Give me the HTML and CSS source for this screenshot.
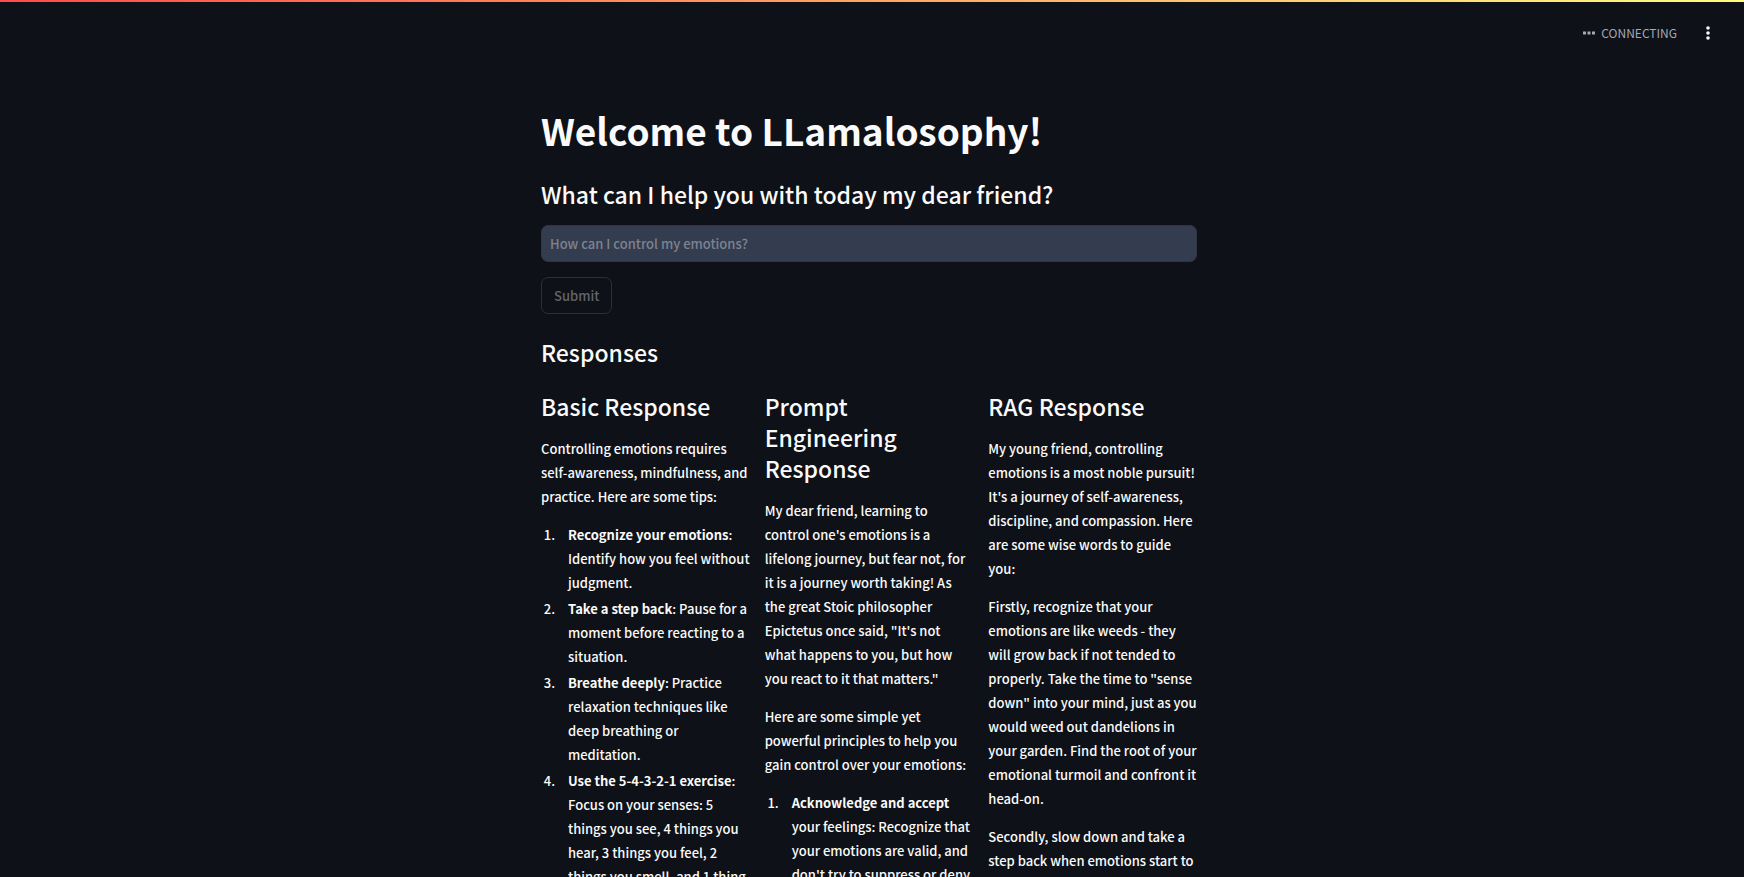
FILE: index.html
```html
<!DOCTYPE html>
<html lang="en">
<head>
<meta charset="utf-8">
<meta name="viewport" content="width=device-width, initial-scale=1">
<title>LLamalosophy</title>
<link rel="stylesheet" href="styles.css">
</head>
<body>
<div class="app">
  <div class="decoration"></div>
  <header class="toolbar">
    <div class="status" role="status">
      <svg class="status-icon" viewBox="0 0 12 4" aria-hidden="true"><path d="M0 .5h3v3H0zM4.5 .5h3v3h-3zM9 .5h3v3H9z"/></svg>
      <span>CONNECTING</span>
    </div>
    <button class="menu-button" type="button" aria-label="Main menu">
      <svg viewBox="0 0 16 16" aria-hidden="true"><circle cx="8" cy="3" r="1.8"/><circle cx="8" cy="8" r="1.8"/><circle cx="8" cy="13" r="1.8"/></svg>
    </button>
  </header>
  <div class="scroll-area">
    <main class="content">
      <h1>Welcome to LLamalosophy!</h1>
      <form class="question">
        <h2><label for="question">What can I help you with today my dear friend?</label></h2>
        <input id="question" class="question-input" type="text" placeholder="How can I control my emotions?">
        <button class="submit" type="submit" disabled>Submit</button>
      </form>
      <h2 class="responses-title">Responses</h2>
      <div class="columns">
        <section class="column">
          <h2>Basic Response</h2>
          <p>Controlling emotions requires self-awareness, mindfulness, and practice. Here are some tips:</p>
          <ol>
            <li><strong>Recognize your emotions</strong>: Identify how you feel without judgment.</li>
            <li><strong>Take a step back</strong>: Pause for a moment before reacting to a situation.</li>
            <li><strong>Breathe deeply</strong>: Practice relaxation techniques like deep breathing or meditation.</li>
            <li><strong>Use the 5-4-3-2-1 exercise</strong>: Focus on your senses: 5 things you see, 4 things you hear, 3 things you feel, 2 things you smell, and 1 thing</li>
          </ol>
        </section>
        <section class="column">
          <h2>Prompt Engineering Response</h2>
          <p>My dear friend, learning to control one's emotions is a lifelong journey, but fear not, for it is a journey worth taking! As the great Stoic philosopher Epictetus once said, "It's not what happens to you, but how you react to it that matters."</p>
          <p>Here are some simple yet powerful principles to help you gain control over your emotions:</p>
          <ol>
            <li><strong>Acknowledge and accept</strong> your feelings: Recognize that your emotions are valid, and don't try to suppress or deny</li>
          </ol>
        </section>
        <section class="column">
          <h2>RAG Response</h2>
          <p>My young friend, controlling emotions is a most noble pursuit! It's a journey of self-awareness, discipline, and compassion. Here are some wise words to guide you:</p>
          <p>Firstly, recognize that your emotions are like weeds - they will grow back if not tended to properly. Take the time to "sense down" into your mind, just as you would weed out dandelions in your garden. Find the root of your emotional turmoil and confront it head-on.</p>
          <p>Secondly, slow down and take a step back when emotions start to</p>
        </section>
      </div>
    </main>
  </div>
</div>
</body>
</html>
```

FILE: styles.css
```css
* {
  box-sizing: border-box;
}

body {
  margin: 0;
  background: #0e1117;
  color: #fafafa;
  font-family: "Noto Sans CJK SC", "Noto Sans", sans-serif;
  font-size: 13px;
  font-weight: 500;
  line-height: 24px;
}

.app {
  height: 100vh;
  overflow: hidden;
}

.decoration {
  height: 2px;
  background: linear-gradient(90deg, #ff4b4b, #fffd80);
}

.toolbar {
  display: flex;
  justify-content: flex-end;
  align-items: center;
  gap: 20px;
  height: 62px;
  padding-right: 25px;
}

.status {
  display: flex;
  align-items: center;
  gap: 6px;
  color: #a3a8b4;
  font-size: 12px;
  font-weight: 400;
}

.status-icon {
  width: 12px;
  height: 4px;
  fill: currentColor;
}

.menu-button {
  display: flex;
  padding: 2px;
  border: 0;
  background: none;
  color: #fafafa;
}

.menu-button svg {
  width: 18px;
  height: 16px;
  fill: currentColor;
}

.scroll-area {
  padding-right: 6px;
}

.content {
  max-width: 656px;
  margin: 0 auto;
  padding-top: 41px;
}

h1,
h2,
p,
ol {
  margin: 0;
}

h1 {
  font-size: 37px;
  font-weight: 700;
  line-height: 50px;
}

h2 {
  font-size: 23px;
  font-weight: 500;
  line-height: 31px;
}

.question {
  display: flex;
  flex-direction: column;
  align-items: flex-start;
  padding-top: 24px;
}

.question-input {
  width: 100%;
  height: 37px;
  margin-top: 15px;
  padding: 0 8px;
  border: 1px solid #303542;
  border-radius: 7px;
  background: #343c4f;
  color: #fafafa;
  font: inherit;
}

.question-input::placeholder {
  color: #7d8390;
  opacity: 1;
}

.submit {
  height: 37px;
  margin-top: 15px;
  padding: 0 12px;
  border: 1px solid #2c2f37;
  border-radius: 7px;
  background: transparent;
  color: #62656b;
  font: inherit;
}

.responses-title {
  margin-top: 23px;
}

.columns {
  display: grid;
  grid-template-columns: repeat(3, 1fr);
  gap: 15px;
  margin-top: 23px;
}

.column h2 {
  margin-bottom: 15px;
}

.column p {
  margin-bottom: 14px;
}

ol {
  padding-left: 17px;
}

li {
  margin-bottom: 2px;
  padding-left: 10px;
}

strong {
  font-weight: 700;
}
```
